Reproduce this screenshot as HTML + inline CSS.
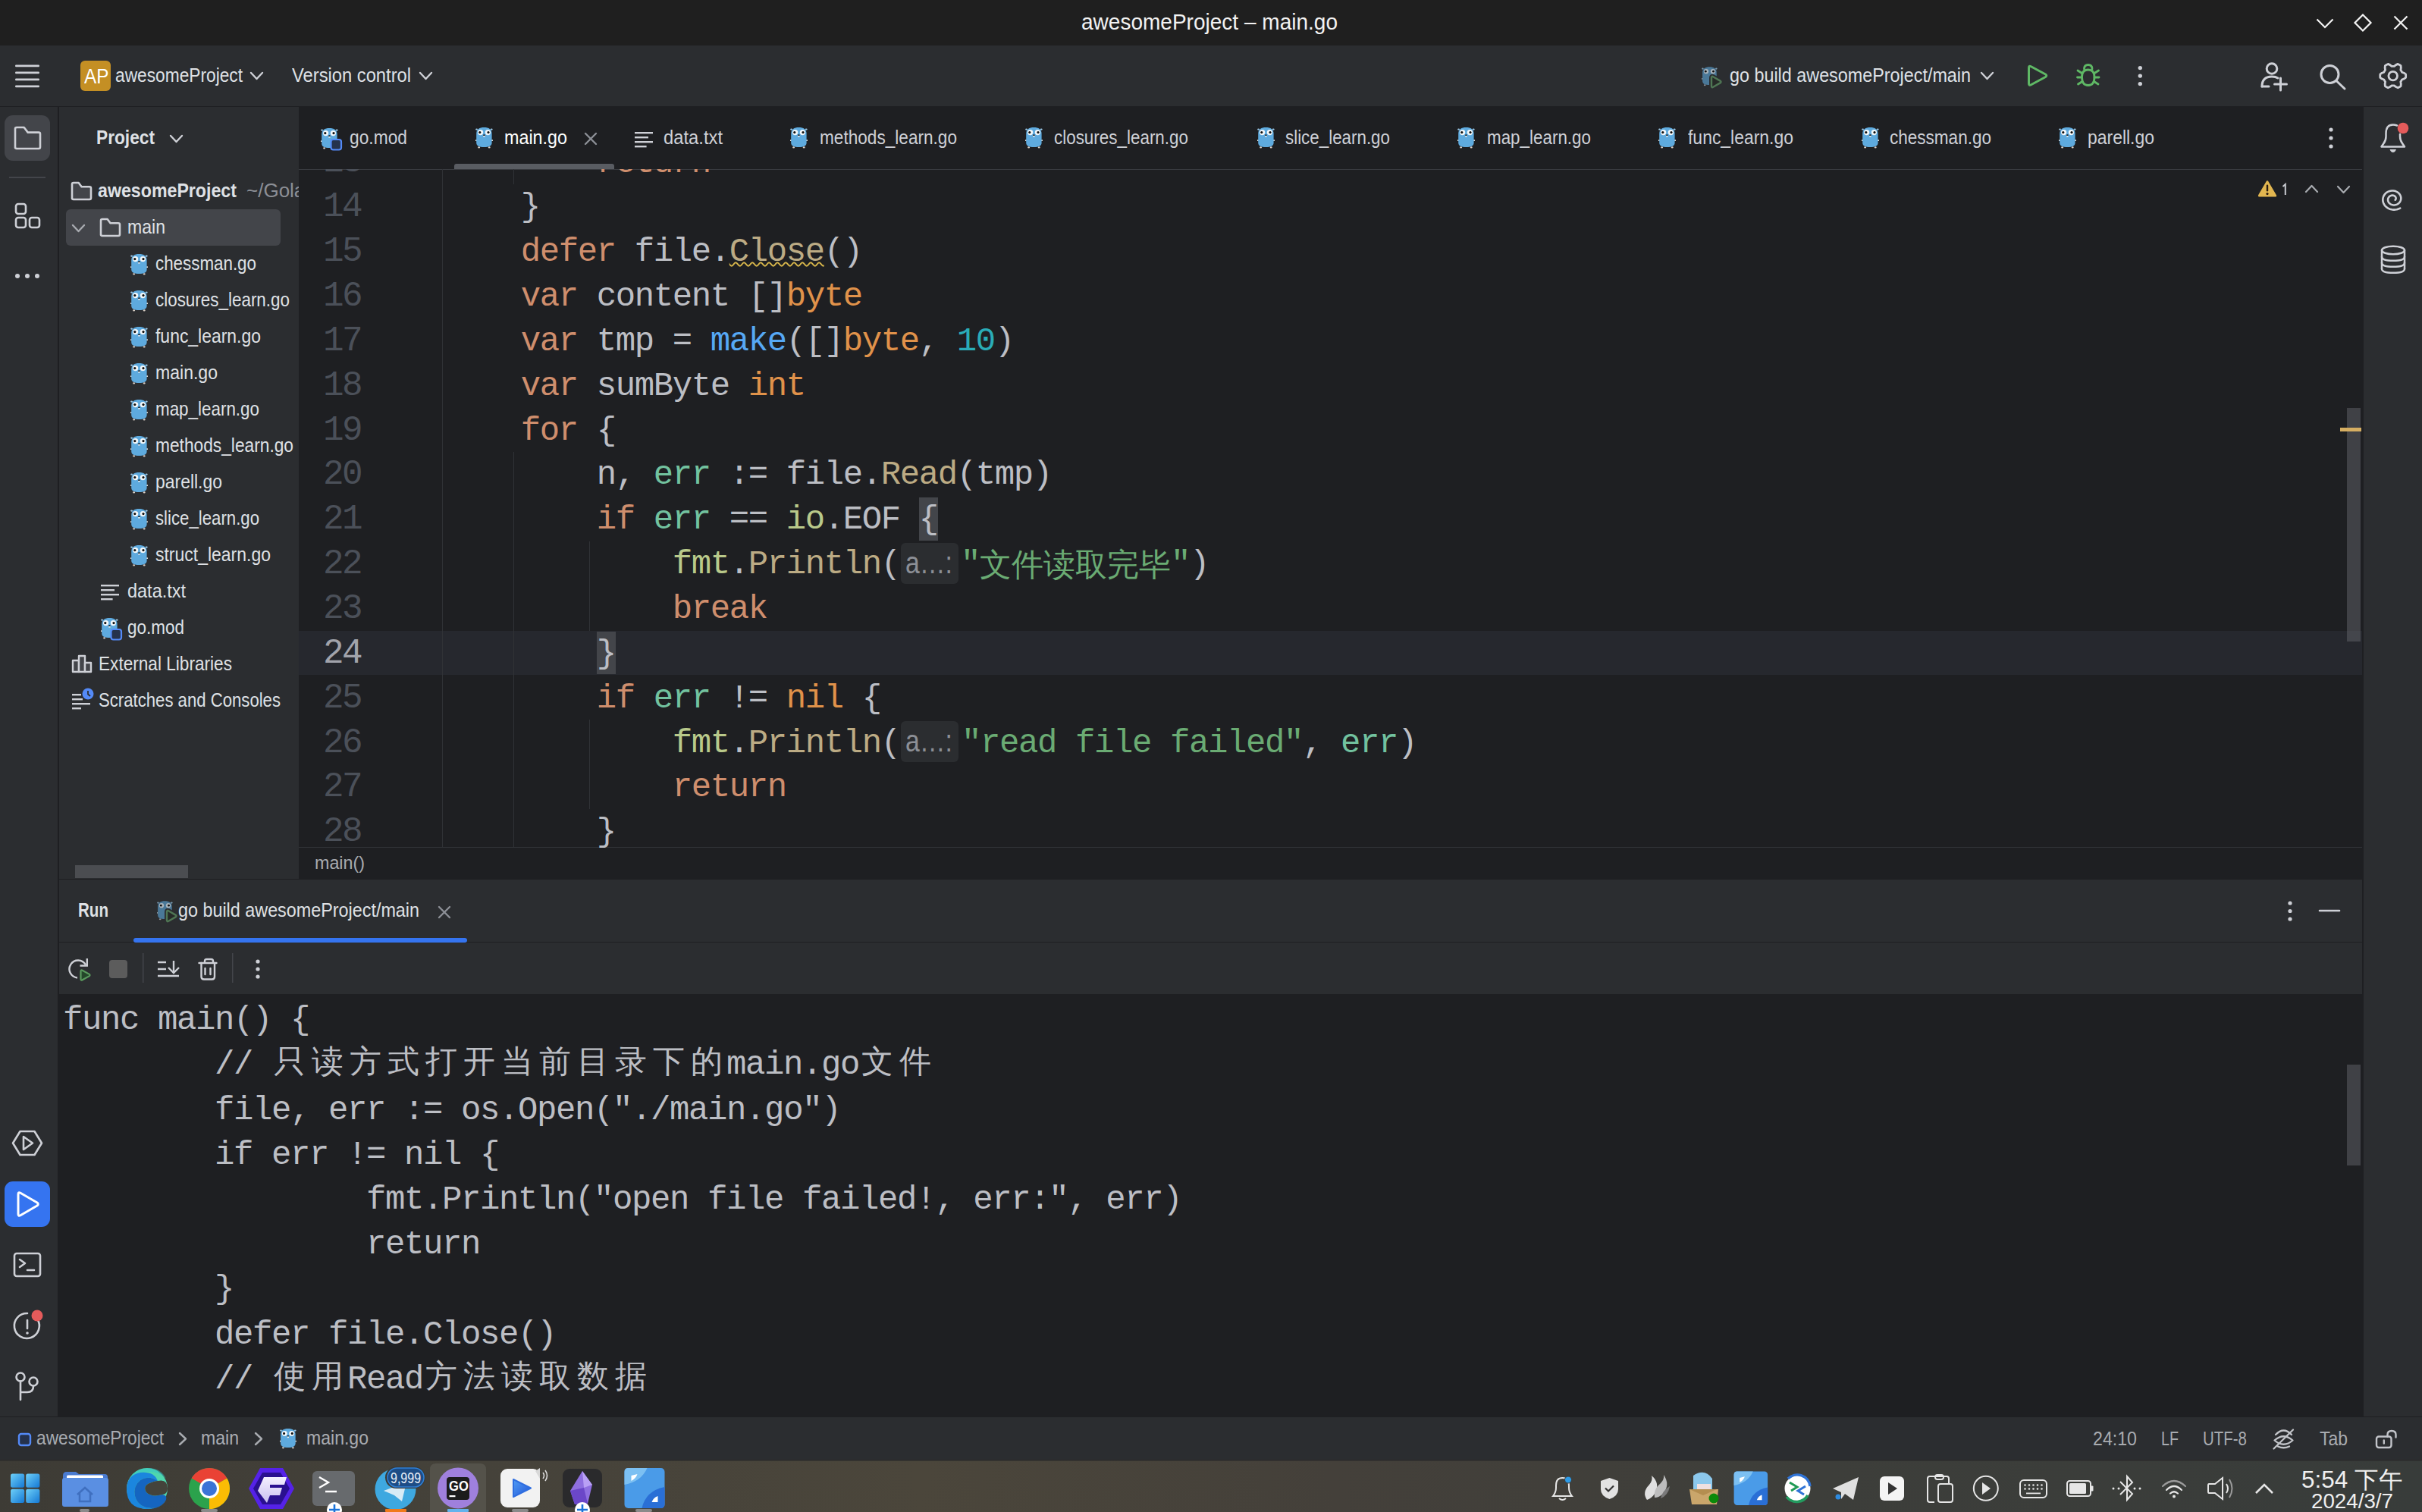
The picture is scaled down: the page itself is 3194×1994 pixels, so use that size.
<!DOCTYPE html>
<html><head><meta charset="utf-8"><title>awesomeProject – main.go</title>
<style>
html,body{margin:0;padding:0;background:#1e1f22;}
body{width:3194px;height:1994px;position:relative;overflow:hidden;font-family:'Liberation Sans', sans-serif;}
svg{overflow:visible}
</style></head><body>
<svg width="0" height="0" style="position:absolute">
<defs>
<symbol id="gopher" viewBox="0 0 23 29">
  <ellipse cx="1.6" cy="3.6" rx="1.4" ry="1.2" fill="#9cc8e6"/>
  <ellipse cx="21.2" cy="3.6" rx="1.4" ry="1.2" fill="#9cc8e6"/>
  <ellipse cx="0.9" cy="18.2" rx="1.3" ry="0.9" fill="#e9e3dd"/>
  <ellipse cx="22" cy="18.2" rx="1.3" ry="0.9" fill="#e9e3dd"/>
  <ellipse cx="4.6" cy="27.4" rx="1.5" ry="1.1" fill="#d9cfc6"/>
  <ellipse cx="18.2" cy="27.4" rx="1.5" ry="1.1" fill="#d9cfc6"/>
  <path d="M1.2 9.5 C1.2 3.2 5.2 1 11.4 1 C17.6 1 21.6 3.2 21.6 9.5 L21.6 21 C21.6 25.8 17.6 27 11.4 27 C5.2 27 1.2 25.8 1.2 21 Z" fill="#5eaade"/>
  <circle cx="6.6" cy="7.6" r="3.6" fill="#f4f8fa"/>
  <circle cx="16.4" cy="7.6" r="3.6" fill="#f4f8fa"/>
  <circle cx="5.8" cy="7.6" r="1.6" fill="#111"/>
  <circle cx="17" cy="7.6" r="1.6" fill="#111"/>
  <ellipse cx="11.4" cy="11.2" rx="1.3" ry="0.9" fill="#1a1a1a"/>
  <rect x="10.3" y="12" width="2.2" height="1.6" fill="#f4f4f4"/>
</symbol>
<symbol id="gopherdim" viewBox="0 0 23 29">
  <ellipse cx="1.6" cy="3.6" rx="1.4" ry="1.2" fill="#7d9db3"/>
  <ellipse cx="21.2" cy="3.6" rx="1.4" ry="1.2" fill="#7d9db3"/>
  <ellipse cx="0.9" cy="18.2" rx="1.3" ry="0.9" fill="#9aa0a6"/>
  <ellipse cx="4.6" cy="27.4" rx="1.5" ry="1.1" fill="#8a9096"/>
  <path d="M1.2 9.5 C1.2 3.2 5.2 1 11.4 1 C17.6 1 21.6 3.2 21.6 9.5 L21.6 21 C21.6 25.8 17.6 27 11.4 27 C5.2 27 1.2 25.8 1.2 21 Z" fill="#4a7898"/>
  <circle cx="6.6" cy="7.6" r="3.4" fill="#aab4bb"/>
  <circle cx="16.4" cy="7.6" r="3.4" fill="#aab4bb"/>
  <circle cx="5.8" cy="7.6" r="1.5" fill="#111"/>
  <circle cx="17" cy="7.6" r="1.5" fill="#111"/>
</symbol>
</defs></svg>
<div style="position:absolute;left:0px;top:0px;width:3194px;height:60px;background:#1f1f1f;"></div><div style="position:absolute;left:0px;top:60px;width:3194px;height:80px;background:#2b2d30;"></div><div style="position:absolute;left:0px;top:140px;width:3194px;height:1729px;background:#1e1f22;"></div><div style="position:absolute;left:0px;top:141px;width:76px;height:1727px;background:#2b2d30;"></div><div style="position:absolute;left:78px;top:141px;width:316px;height:1018px;background:#2b2d30;"></div><div style="position:absolute;left:394px;top:141px;width:2721px;height:976px;background:#1e1f22;"></div><div style="position:absolute;left:394px;top:1117px;width:2721px;height:42px;background:#1e1f22;"></div><div style="position:absolute;left:78px;top:1160px;width:3037px;height:82px;background:#2b2d30;"></div><div style="position:absolute;left:78px;top:1243px;width:3037px;height:68px;background:#2b2d30;"></div><div style="position:absolute;left:78px;top:1311px;width:3037px;height:557px;background:#1e1f22;"></div><div style="position:absolute;left:3117px;top:141px;width:77px;height:1727px;background:#2b2d30;"></div><div style="position:absolute;left:0px;top:1869px;width:3194px;height:56px;background:#2b2d30;"></div><div style="position:absolute;left:0;top:1925px;width:3194px;height:69px;background:linear-gradient(90deg,#3d3b35 0%,#45423a 20%,#4b463b 38%,#44403a 55%,#3d3e3a 75%,#383c3a 100%)"></div><div style="position:absolute;left:394px;top:223px;width:2721px;height:1.2px;background:#393b40;"></div><div style="position:absolute;left:599px;top:216px;width:211px;height:7px;background:#595c62;border-radius:3px 3px 0 0"></div><div style="position:absolute;left:394px;top:831.6px;width:2721px;height:58.86px;background:#26282e;"></div><div style="position:absolute;left:583px;top:223px;width:1.3px;height:894px;background:#303236;"></div><div style="position:absolute;left:677px;top:223px;width:1.3px;height:20.0px;background:#303236;"></div><div style="position:absolute;left:677px;top:596.16px;width:1.3px;height:520.84px;background:#303236;"></div><div style="position:absolute;left:777px;top:713.88px;width:1.3px;height:117.72px;background:#303236;"></div><div style="position:absolute;left:777px;top:949.3199999999999px;width:1.3px;height:117.72px;background:#303236;"></div><div style="position:absolute;left:394px;top:1116.5px;width:2721px;height:1.2px;background:#303236;"></div><div style="position:absolute;left:3095px;top:538px;width:18px;height:308px;background:rgba(98,100,106,0.5);"></div><div style="position:absolute;left:3086px;top:564px;width:28px;height:5px;background:#d6ae62;"></div><div style="position:absolute;left:99px;top:1141px;width:149px;height:17px;background:#4b4d51;"></div><div style="position:absolute;left:3095px;top:1404px;width:18px;height:133px;background:rgba(98,100,106,0.5);"></div><div style="position:absolute;left:1426px;top:15.45px;font-family:'Liberation Sans', sans-serif;font-size:29px;line-height:29px;font-weight:400;color:#f2f2f2;white-space:pre;transform:scaleX(0.9663);transform-origin:0 0;">awesomeProject – main.go</div><div style="position:absolute;left:152px;top:85.99px;font-family:'Liberation Sans', sans-serif;font-size:26px;line-height:26px;font-weight:400;color:#dfe1e5;white-space:pre;transform:scaleX(0.8741);transform-origin:0 0;">awesomeProject</div><div style="position:absolute;left:385px;top:85.99px;font-family:'Liberation Sans', sans-serif;font-size:26px;line-height:26px;font-weight:400;color:#dfe1e5;white-space:pre;transform:scaleX(0.9129);transform-origin:0 0;">Version control</div><div style="position:absolute;left:2281px;top:85.99px;font-family:'Liberation Sans', sans-serif;font-size:26px;line-height:26px;font-weight:400;color:#dfe1e5;white-space:pre;transform:scaleX(0.8981);transform-origin:0 0;">go build awesomeProject/main</div><div style="position:absolute;left:461px;top:167.99px;font-family:'Liberation Sans', sans-serif;font-size:26px;line-height:26px;font-weight:400;color:#ced0d6;white-space:pre;transform:scaleX(0.8762);transform-origin:0 0;">go.mod</div><div style="position:absolute;left:665px;top:167.99px;font-family:'Liberation Sans', sans-serif;font-size:26px;line-height:26px;font-weight:400;color:#ffffff;white-space:pre;transform:scaleX(0.8973);transform-origin:0 0;">main.go</div><div style="position:absolute;left:875px;top:167.99px;font-family:'Liberation Sans', sans-serif;font-size:26px;line-height:26px;font-weight:400;color:#ced0d6;white-space:pre;transform:scaleX(0.9146);transform-origin:0 0;">data.txt</div><div style="position:absolute;left:1081px;top:167.99px;font-family:'Liberation Sans', sans-serif;font-size:26px;line-height:26px;font-weight:400;color:#ced0d6;white-space:pre;transform:scaleX(0.8696);transform-origin:0 0;">methods_learn.go</div><div style="position:absolute;left:1390px;top:167.99px;font-family:'Liberation Sans', sans-serif;font-size:26px;line-height:26px;font-weight:400;color:#ced0d6;white-space:pre;transform:scaleX(0.8624);transform-origin:0 0;">closures_learn.go</div><div style="position:absolute;left:1695px;top:167.99px;font-family:'Liberation Sans', sans-serif;font-size:26px;line-height:26px;font-weight:400;color:#ced0d6;white-space:pre;transform:scaleX(0.8601);transform-origin:0 0;">slice_learn.go</div><div style="position:absolute;left:1961px;top:167.99px;font-family:'Liberation Sans', sans-serif;font-size:26px;line-height:26px;font-weight:400;color:#ced0d6;white-space:pre;transform:scaleX(0.8616);transform-origin:0 0;">map_learn.go</div><div style="position:absolute;left:2226px;top:167.99px;font-family:'Liberation Sans', sans-serif;font-size:26px;line-height:26px;font-weight:400;color:#ced0d6;white-space:pre;transform:scaleX(0.8822);transform-origin:0 0;">func_learn.go</div><div style="position:absolute;left:2492px;top:167.99px;font-family:'Liberation Sans', sans-serif;font-size:26px;line-height:26px;font-weight:400;color:#ced0d6;white-space:pre;transform:scaleX(0.8664);transform-origin:0 0;">chessman.go</div><div style="position:absolute;left:2753px;top:167.99px;font-family:'Liberation Sans', sans-serif;font-size:26px;line-height:26px;font-weight:400;color:#ced0d6;white-space:pre;transform:scaleX(0.8823);transform-origin:0 0;">parell.go</div><div style="position:absolute;left:127px;top:167.99px;font-family:'Liberation Sans', sans-serif;font-size:26px;line-height:26px;font-weight:700;color:#dfe1e5;white-space:pre;transform:scaleX(0.8734);transform-origin:0 0;">Project</div><div style="position:absolute;left:129px;top:237.99px;font-family:'Liberation Sans', sans-serif;font-size:26px;line-height:26px;font-weight:700;color:#dfe1e5;white-space:pre;transform:scaleX(0.8917);transform-origin:0 0;">awesomeProject</div><div style="position:absolute;left:325px;top:230px;width:69px;height:45px;overflow:hidden"><div style="position:absolute;left:0px;top:7.99px;font-family:'Liberation Sans', sans-serif;font-size:26px;line-height:26px;font-weight:400;color:#8c8f96;white-space:pre;">~/GolandProjects/awesomeProject</div></div><div style="position:absolute;left:87px;top:276px;width:283px;height:48px;background:#43454a;border-radius:6px"></div><div style="position:absolute;left:168px;top:285.99px;font-family:'Liberation Sans', sans-serif;font-size:26px;line-height:26px;font-weight:400;color:#dfe1e5;white-space:pre;transform:scaleX(0.8872);transform-origin:0 0;">main</div><div style="position:absolute;left:205px;top:333.99px;font-family:'Liberation Sans', sans-serif;font-size:26px;line-height:26px;font-weight:400;color:#dfe1e5;white-space:pre;transform:scaleX(0.8600);transform-origin:0 0;">chessman.go</div><div style="position:absolute;left:205px;top:381.99px;font-family:'Liberation Sans', sans-serif;font-size:26px;line-height:26px;font-weight:400;color:#dfe1e5;white-space:pre;transform:scaleX(0.8624);transform-origin:0 0;">closures_learn.go</div><div style="position:absolute;left:205px;top:429.99px;font-family:'Liberation Sans', sans-serif;font-size:26px;line-height:26px;font-weight:400;color:#dfe1e5;white-space:pre;transform:scaleX(0.8822);transform-origin:0 0;">func_learn.go</div><div style="position:absolute;left:205px;top:477.99px;font-family:'Liberation Sans', sans-serif;font-size:26px;line-height:26px;font-weight:400;color:#dfe1e5;white-space:pre;transform:scaleX(0.8865);transform-origin:0 0;">main.go</div><div style="position:absolute;left:205px;top:525.99px;font-family:'Liberation Sans', sans-serif;font-size:26px;line-height:26px;font-weight:400;color:#dfe1e5;white-space:pre;transform:scaleX(0.8616);transform-origin:0 0;">map_learn.go</div><div style="position:absolute;left:205px;top:573.99px;font-family:'Liberation Sans', sans-serif;font-size:26px;line-height:26px;font-weight:400;color:#dfe1e5;white-space:pre;transform:scaleX(0.8744);transform-origin:0 0;">methods_learn.go</div><div style="position:absolute;left:205px;top:621.99px;font-family:'Liberation Sans', sans-serif;font-size:26px;line-height:26px;font-weight:400;color:#dfe1e5;white-space:pre;transform:scaleX(0.8823);transform-origin:0 0;">parell.go</div><div style="position:absolute;left:205px;top:669.99px;font-family:'Liberation Sans', sans-serif;font-size:26px;line-height:26px;font-weight:400;color:#dfe1e5;white-space:pre;transform:scaleX(0.8539);transform-origin:0 0;">slice_learn.go</div><div style="position:absolute;left:205px;top:717.99px;font-family:'Liberation Sans', sans-serif;font-size:26px;line-height:26px;font-weight:400;color:#dfe1e5;white-space:pre;transform:scaleX(0.8838);transform-origin:0 0;">struct_learn.go</div><div style="position:absolute;left:168px;top:765.99px;font-family:'Liberation Sans', sans-serif;font-size:26px;line-height:26px;font-weight:400;color:#dfe1e5;white-space:pre;transform:scaleX(0.9029);transform-origin:0 0;">data.txt</div><div style="position:absolute;left:168px;top:813.99px;font-family:'Liberation Sans', sans-serif;font-size:26px;line-height:26px;font-weight:400;color:#dfe1e5;white-space:pre;transform:scaleX(0.8647);transform-origin:0 0;">go.mod</div><div style="position:absolute;left:130px;top:861.99px;font-family:'Liberation Sans', sans-serif;font-size:26px;line-height:26px;font-weight:400;color:#dfe1e5;white-space:pre;transform:scaleX(0.8699);transform-origin:0 0;">External Libraries</div><div style="position:absolute;left:130px;top:909.99px;font-family:'Liberation Sans', sans-serif;font-size:26px;line-height:26px;font-weight:400;color:#dfe1e5;white-space:pre;transform:scaleX(0.8516);transform-origin:0 0;">Scratches and Consoles</div><div style="position:absolute;left:394px;top:223px;width:200px;height:894px;overflow:hidden;pointer-events:none"><div style="position:absolute;left:32px;top:-31.60px;font-family:'Liberation Mono', monospace;font-size:46px;line-height:46px;font-weight:400;color:#4b5059;white-space:pre;letter-spacing:-2.600px;">13</div></div><div style="position:absolute;left:426px;top:250.26px;font-family:'Liberation Mono', monospace;font-size:46px;line-height:46px;font-weight:400;color:#4b5059;white-space:pre;letter-spacing:-2.600px;">14</div><div style="position:absolute;left:426px;top:309.12px;font-family:'Liberation Mono', monospace;font-size:46px;line-height:46px;font-weight:400;color:#4b5059;white-space:pre;letter-spacing:-2.600px;">15</div><div style="position:absolute;left:426px;top:367.98px;font-family:'Liberation Mono', monospace;font-size:46px;line-height:46px;font-weight:400;color:#4b5059;white-space:pre;letter-spacing:-2.600px;">16</div><div style="position:absolute;left:426px;top:426.84px;font-family:'Liberation Mono', monospace;font-size:46px;line-height:46px;font-weight:400;color:#4b5059;white-space:pre;letter-spacing:-2.600px;">17</div><div style="position:absolute;left:426px;top:485.70px;font-family:'Liberation Mono', monospace;font-size:46px;line-height:46px;font-weight:400;color:#4b5059;white-space:pre;letter-spacing:-2.600px;">18</div><div style="position:absolute;left:426px;top:544.56px;font-family:'Liberation Mono', monospace;font-size:46px;line-height:46px;font-weight:400;color:#4b5059;white-space:pre;letter-spacing:-2.600px;">19</div><div style="position:absolute;left:426px;top:603.42px;font-family:'Liberation Mono', monospace;font-size:46px;line-height:46px;font-weight:400;color:#4b5059;white-space:pre;letter-spacing:-2.600px;">20</div><div style="position:absolute;left:426px;top:662.28px;font-family:'Liberation Mono', monospace;font-size:46px;line-height:46px;font-weight:400;color:#4b5059;white-space:pre;letter-spacing:-2.600px;">21</div><div style="position:absolute;left:426px;top:721.14px;font-family:'Liberation Mono', monospace;font-size:46px;line-height:46px;font-weight:400;color:#4b5059;white-space:pre;letter-spacing:-2.600px;">22</div><div style="position:absolute;left:426px;top:780.00px;font-family:'Liberation Mono', monospace;font-size:46px;line-height:46px;font-weight:400;color:#4b5059;white-space:pre;letter-spacing:-2.600px;">23</div><div style="position:absolute;left:426px;top:838.86px;font-family:'Liberation Mono', monospace;font-size:46px;line-height:46px;font-weight:400;color:#a1a3ab;white-space:pre;letter-spacing:-2.600px;">24</div><div style="position:absolute;left:426px;top:897.72px;font-family:'Liberation Mono', monospace;font-size:46px;line-height:46px;font-weight:400;color:#4b5059;white-space:pre;letter-spacing:-2.600px;">25</div><div style="position:absolute;left:426px;top:956.58px;font-family:'Liberation Mono', monospace;font-size:46px;line-height:46px;font-weight:400;color:#4b5059;white-space:pre;letter-spacing:-2.600px;">26</div><div style="position:absolute;left:426px;top:1015.44px;font-family:'Liberation Mono', monospace;font-size:46px;line-height:46px;font-weight:400;color:#4b5059;white-space:pre;letter-spacing:-2.600px;">27</div><div style="position:absolute;left:426px;top:1074.30px;font-family:'Liberation Mono', monospace;font-size:46px;line-height:46px;font-weight:400;color:#4b5059;white-space:pre;letter-spacing:-2.600px;">28</div><div style="position:absolute;left:394px;top:223px;width:2721px;height:100px;overflow:hidden"><div style="position:absolute;left:392.70000000000005px;top:-30.07px;font-family:'Liberation Mono', monospace;font-size:44px;line-height:44px;font-weight:400;color:#cf8e6d;white-space:pre;letter-spacing:-1.400px;">return</div></div><div style="position:absolute;left:686.7px;top:251.29px;font-family:'Liberation Mono', monospace;font-size:44px;line-height:44px;font-weight:400;color:#bcbec4;white-space:pre;letter-spacing:-1.400px;"><span style="color:#bcbec4">}</span></div><div style="position:absolute;left:686.7px;top:310.15px;font-family:'Liberation Mono', monospace;font-size:44px;line-height:44px;font-weight:400;color:#bcbec4;white-space:pre;letter-spacing:-1.400px;"><span style="color:#cf8e6d">defer</span><span style="color:#bcbec4"> file.</span><span style="color:#bcab84;text-decoration:underline wavy #d8b64a;text-underline-offset:1px;text-decoration-thickness:2px">Close</span><span style="color:#bcbec4">()</span></div><div style="position:absolute;left:686.7px;top:369.01px;font-family:'Liberation Mono', monospace;font-size:44px;line-height:44px;font-weight:400;color:#bcbec4;white-space:pre;letter-spacing:-1.400px;"><span style="color:#cf8e6d">var</span><span style="color:#bcbec4"> content []</span><span style="color:#e0924a">byte</span></div><div style="position:absolute;left:686.7px;top:427.87px;font-family:'Liberation Mono', monospace;font-size:44px;line-height:44px;font-weight:400;color:#bcbec4;white-space:pre;letter-spacing:-1.400px;"><span style="color:#cf8e6d">var</span><span style="color:#bcbec4"> tmp = </span><span style="color:#56a8f5">make</span><span style="color:#bcbec4">([]</span><span style="color:#e0924a">byte</span><span style="color:#bcbec4">, </span><span style="color:#2aacb8">10</span><span style="color:#bcbec4">)</span></div><div style="position:absolute;left:686.7px;top:486.73px;font-family:'Liberation Mono', monospace;font-size:44px;line-height:44px;font-weight:400;color:#bcbec4;white-space:pre;letter-spacing:-1.400px;"><span style="color:#cf8e6d">var</span><span style="color:#bcbec4"> sumByte </span><span style="color:#e0924a">int</span></div><div style="position:absolute;left:686.7px;top:545.59px;font-family:'Liberation Mono', monospace;font-size:44px;line-height:44px;font-weight:400;color:#bcbec4;white-space:pre;letter-spacing:-1.400px;"><span style="color:#cf8e6d">for</span><span style="color:#bcbec4"> {</span></div><div style="position:absolute;left:786.7px;top:604.45px;font-family:'Liberation Mono', monospace;font-size:44px;line-height:44px;font-weight:400;color:#bcbec4;white-space:pre;letter-spacing:-1.400px;"><span style="color:#bcbec4">n, </span><span style="color:#72c29f">err</span><span style="color:#bcbec4"> := file.</span><span style="color:#bcab84">Read</span><span style="color:#bcbec4">(tmp)</span></div><div style="position:absolute;left:1211.7px;top:656.02px;width:25px;height:56.86px;background:#43454a;"></div><div style="position:absolute;left:786.7px;top:832.6px;width:25px;height:56.86px;background:#43454a;"></div><div style="position:absolute;left:786.7px;top:663.31px;font-family:'Liberation Mono', monospace;font-size:44px;line-height:44px;font-weight:400;color:#bcbec4;white-space:pre;letter-spacing:-1.400px;"><span style="color:#cf8e6d">if</span><span style="color:#bcbec4"> </span><span style="color:#72c29f">err</span><span style="color:#bcbec4"> == </span><span style="color:#b9c98a">io</span><span style="color:#bcbec4">.EOF {</span></div><div style="position:absolute;left:1188px;top:715.9px;width:76px;height:54px;background:#2b2d30;border-radius:6px"></div><div style="position:absolute;left:1194px;top:722.02px;font-family:'Liberation Sans', sans-serif;font-size:40px;line-height:40px;font-weight:400;color:#8c8f96;white-space:pre;transform:scaleX(0.8452);transform-origin:0 0;">a…:</div><div style="position:absolute;left:1188px;top:951.3px;width:76px;height:54px;background:#2b2d30;border-radius:6px"></div><div style="position:absolute;left:1194px;top:957.46px;font-family:'Liberation Sans', sans-serif;font-size:40px;line-height:40px;font-weight:400;color:#8c8f96;white-space:pre;transform:scaleX(0.8452);transform-origin:0 0;">a…:</div><div style="position:absolute;left:886.7px;top:722.17px;font-family:'Liberation Mono', monospace;font-size:44px;line-height:44px;font-weight:400;color:#bcbec4;white-space:pre;letter-spacing:-1.400px;"><span style="color:#b9c98a">fmt</span><span style="color:#bcbec4">.</span><span style="color:#bcab84">Println</span><span style="color:#bcbec4">(</span></div><div style="position:absolute;left:1267px;top:722.17px;font-family:'Liberation Mono', monospace;font-size:44px;line-height:44px;font-weight:400;color:#6aab73;white-space:pre;letter-spacing:-1.400px;">"<span style="letter-spacing:0;font-size:41.5px;position:relative;top:2.5px">文件读取完毕</span>"<span style="color:#bcbec4">)</span></div><div style="position:absolute;left:886.7px;top:781.03px;font-family:'Liberation Mono', monospace;font-size:44px;line-height:44px;font-weight:400;color:#bcbec4;white-space:pre;letter-spacing:-1.400px;"><span style="color:#cf8e6d">break</span></div><div style="position:absolute;left:786.7px;top:839.89px;font-family:'Liberation Mono', monospace;font-size:44px;line-height:44px;font-weight:400;color:#bcbec4;white-space:pre;letter-spacing:-1.400px;"><span style="color:#bcbec4">}</span></div><div style="position:absolute;left:786.7px;top:898.75px;font-family:'Liberation Mono', monospace;font-size:44px;line-height:44px;font-weight:400;color:#bcbec4;white-space:pre;letter-spacing:-1.400px;"><span style="color:#cf8e6d">if</span><span style="color:#bcbec4"> </span><span style="color:#72c29f">err</span><span style="color:#bcbec4"> != </span><span style="color:#e0924a">nil</span><span style="color:#bcbec4"> {</span></div><div style="position:absolute;left:886.7px;top:957.61px;font-family:'Liberation Mono', monospace;font-size:44px;line-height:44px;font-weight:400;color:#bcbec4;white-space:pre;letter-spacing:-1.400px;"><span style="color:#b9c98a">fmt</span><span style="color:#bcbec4">.</span><span style="color:#bcab84">Println</span><span style="color:#bcbec4">(</span></div><div style="position:absolute;left:1268px;top:957.61px;font-family:'Liberation Mono', monospace;font-size:44px;line-height:44px;font-weight:400;color:#6aab73;white-space:pre;letter-spacing:-1.400px;">"read file failed"<span style="color:#bcbec4">, </span><span style="color:#72c29f">err</span><span style="color:#bcbec4">)</span></div><div style="position:absolute;left:886.7px;top:1016.47px;font-family:'Liberation Mono', monospace;font-size:44px;line-height:44px;font-weight:400;color:#bcbec4;white-space:pre;letter-spacing:-1.400px;"><span style="color:#cf8e6d">return</span></div><div style="position:absolute;left:786.7px;top:1075.33px;font-family:'Liberation Mono', monospace;font-size:44px;line-height:44px;font-weight:400;color:#bcbec4;white-space:pre;letter-spacing:-1.400px;"><span style="color:#bcbec4">}</span></div><div style="position:absolute;left:415px;top:1125.68px;font-family:'Liberation Sans', sans-serif;font-size:24px;line-height:24px;font-weight:400;color:#a8abb0;white-space:pre;transform:scaleX(0.9704);transform-origin:0 0;">main()</div><div style="position:absolute;left:103px;top:1186.99px;font-family:'Liberation Sans', sans-serif;font-size:26px;line-height:26px;font-weight:700;color:#dfe1e5;white-space:pre;transform:scaleX(0.7913);transform-origin:0 0;">Run</div><div style="position:absolute;left:235px;top:1186.99px;font-family:'Liberation Sans', sans-serif;font-size:26px;line-height:26px;font-weight:400;color:#dfe1e5;white-space:pre;transform:scaleX(0.8981);transform-origin:0 0;">go build awesomeProject/main</div><div style="position:absolute;left:176px;top:1237px;width:440px;height:6px;background:#3574f0;border-radius:3px"></div><div style="position:absolute;left:83.0px;top:1323.29px;font-family:'Liberation Mono', monospace;font-size:44px;line-height:44px;font-weight:400;color:#bcbec4;white-space:pre;letter-spacing:-1.400px;">func main() {</div><div style="position:absolute;left:283.0px;top:1382.49px;font-family:'Liberation Mono', monospace;font-size:44px;line-height:44px;font-weight:400;color:#bcbec4;white-space:pre;letter-spacing:-1.400px;">// <span style="letter-spacing:8.00px;font-size:42px;position:relative;top:-2px;left:2.5px">只</span><span style="letter-spacing:8.00px;font-size:42px;position:relative;top:-2px;left:2.5px">读</span><span style="letter-spacing:8.00px;font-size:42px;position:relative;top:-2px;left:2.5px">方</span><span style="letter-spacing:8.00px;font-size:42px;position:relative;top:-2px;left:2.5px">式</span><span style="letter-spacing:8.00px;font-size:42px;position:relative;top:-2px;left:2.5px">打</span><span style="letter-spacing:8.00px;font-size:42px;position:relative;top:-2px;left:2.5px">开</span><span style="letter-spacing:8.00px;font-size:42px;position:relative;top:-2px;left:2.5px">当</span><span style="letter-spacing:8.00px;font-size:42px;position:relative;top:-2px;left:2.5px">前</span><span style="letter-spacing:8.00px;font-size:42px;position:relative;top:-2px;left:2.5px">目</span><span style="letter-spacing:8.00px;font-size:42px;position:relative;top:-2px;left:2.5px">录</span><span style="letter-spacing:8.00px;font-size:42px;position:relative;top:-2px;left:2.5px">下</span><span style="letter-spacing:8.00px;font-size:42px;position:relative;top:-2px;left:2.5px">的</span>main.go<span style="letter-spacing:8.00px;font-size:42px;position:relative;top:-2px;left:2.5px">文</span><span style="letter-spacing:8.00px;font-size:42px;position:relative;top:-2px;left:2.5px">件</span></div><div style="position:absolute;left:283.0px;top:1441.69px;font-family:'Liberation Mono', monospace;font-size:44px;line-height:44px;font-weight:400;color:#bcbec4;white-space:pre;letter-spacing:-1.400px;">file, err := os.Open(&quot;./main.go&quot;)</div><div style="position:absolute;left:283.0px;top:1500.89px;font-family:'Liberation Mono', monospace;font-size:44px;line-height:44px;font-weight:400;color:#bcbec4;white-space:pre;letter-spacing:-1.400px;">if err != nil {</div><div style="position:absolute;left:483.0px;top:1560.09px;font-family:'Liberation Mono', monospace;font-size:44px;line-height:44px;font-weight:400;color:#bcbec4;white-space:pre;letter-spacing:-1.400px;">fmt.Println(&quot;open file failed!, err:&quot;, err)</div><div style="position:absolute;left:483.0px;top:1619.29px;font-family:'Liberation Mono', monospace;font-size:44px;line-height:44px;font-weight:400;color:#bcbec4;white-space:pre;letter-spacing:-1.400px;">return</div><div style="position:absolute;left:283.0px;top:1678.49px;font-family:'Liberation Mono', monospace;font-size:44px;line-height:44px;font-weight:400;color:#bcbec4;white-space:pre;letter-spacing:-1.400px;">}</div><div style="position:absolute;left:283.0px;top:1737.69px;font-family:'Liberation Mono', monospace;font-size:44px;line-height:44px;font-weight:400;color:#bcbec4;white-space:pre;letter-spacing:-1.400px;">defer file.Close()</div><div style="position:absolute;left:283.0px;top:1796.89px;font-family:'Liberation Mono', monospace;font-size:44px;line-height:44px;font-weight:400;color:#bcbec4;white-space:pre;letter-spacing:-1.400px;">// <span style="letter-spacing:8.00px;font-size:42px;position:relative;top:-2px;left:2.5px">使</span><span style="letter-spacing:8.00px;font-size:42px;position:relative;top:-2px;left:2.5px">用</span>Read<span style="letter-spacing:8.00px;font-size:42px;position:relative;top:-2px;left:2.5px">方</span><span style="letter-spacing:8.00px;font-size:42px;position:relative;top:-2px;left:2.5px">法</span><span style="letter-spacing:8.00px;font-size:42px;position:relative;top:-2px;left:2.5px">读</span><span style="letter-spacing:8.00px;font-size:42px;position:relative;top:-2px;left:2.5px">取</span><span style="letter-spacing:8.00px;font-size:42px;position:relative;top:-2px;left:2.5px">数</span><span style="letter-spacing:8.00px;font-size:42px;position:relative;top:-2px;left:2.5px">据</span></div><div style="position:absolute;left:48px;top:1882.99px;font-family:'Liberation Sans', sans-serif;font-size:26px;line-height:26px;font-weight:400;color:#a8abb0;white-space:pre;transform:scaleX(0.8741);transform-origin:0 0;">awesomeProject</div><div style="position:absolute;left:265px;top:1882.99px;font-family:'Liberation Sans', sans-serif;font-size:26px;line-height:26px;font-weight:400;color:#a8abb0;white-space:pre;transform:scaleX(0.8872);transform-origin:0 0;">main</div><div style="position:absolute;left:404px;top:1882.99px;font-family:'Liberation Sans', sans-serif;font-size:26px;line-height:26px;font-weight:400;color:#a8abb0;white-space:pre;transform:scaleX(0.8865);transform-origin:0 0;">main.go</div><div style="position:absolute;left:2760px;top:1883.99px;font-family:'Liberation Sans', sans-serif;font-size:26px;line-height:26px;font-weight:400;color:#a8abb0;white-space:pre;transform:scaleX(0.8912);transform-origin:0 0;">24:10</div><div style="position:absolute;left:2850px;top:1883.99px;font-family:'Liberation Sans', sans-serif;font-size:26px;line-height:26px;font-weight:400;color:#a8abb0;white-space:pre;transform:scaleX(0.7580);transform-origin:0 0;">LF</div><div style="position:absolute;left:2905px;top:1883.99px;font-family:'Liberation Sans', sans-serif;font-size:26px;line-height:26px;font-weight:400;color:#a8abb0;white-space:pre;transform:scaleX(0.7873);transform-origin:0 0;">UTF-8</div><div style="position:absolute;left:3059px;top:1883.99px;font-family:'Liberation Sans', sans-serif;font-size:26px;line-height:26px;font-weight:400;color:#a8abb0;white-space:pre;transform:scaleX(0.8826);transform-origin:0 0;">Tab</div><div style="position:absolute;left:3035px;top:1935.76px;font-family:'Liberation Sans', sans-serif;font-size:31px;line-height:31px;font-weight:400;color:#f0f0f0;white-space:pre;transform:scaleX(1.0156);transform-origin:0 0;">5:54 下午</div><div style="position:absolute;left:3048px;top:1967.14px;font-family:'Liberation Sans', sans-serif;font-size:27px;line-height:27px;font-weight:400;color:#f0f0f0;white-space:pre;transform:scaleX(1.0275);transform-origin:0 0;">2024/3/7</div>
<svg style="position:absolute;left:0;top:0" width="3194" height="1994"><polyline points="3055.5,25.5 3066,36 3076.5,25.5" fill="none" stroke="#f4f4f4" stroke-width="2.2"/><path d="M3116,19.5 L3126.5,30 L3116,40.5 L3105.5,30 Z" fill="none" stroke="#f4f4f4" stroke-width="2.2"/><path d="M3157.5,21.5 L3174.5,38.5 M3174.5,21.5 L3157.5,38.5" fill="none" stroke="#f4f4f4" stroke-width="2.2"/><rect x="20" y="85.5" width="32" height="2.8" rx="1.2" fill="#ced0d6"/><rect x="20" y="94.5" width="32" height="2.8" rx="1.2" fill="#ced0d6"/><rect x="20" y="103.5" width="32" height="2.8" rx="1.2" fill="#ced0d6"/><rect x="20" y="112.5" width="32" height="2.8" rx="1.2" fill="#ced0d6"/><rect x="106" y="80" width="40" height="40" rx="6" fill="#c48f24"/><polyline points="331,96 338.5,104 346,96" fill="none" stroke="#ced0d6" stroke-width="2.4" stroke-linecap="round" stroke-linejoin="round"/><polyline points="554,96 561.5,104 569,96" fill="none" stroke="#ced0d6" stroke-width="2.4" stroke-linecap="round" stroke-linejoin="round"/><use href="#gopherdim" x="2244" y="87" width="21" height="27"/><path d="M2257,102.5 Q2257,100 2259.2,101.2 L2268.5,106.6 Q2270.5,108 2268.5,109.4 L2259.2,114.8 Q2257,116 2257,113.5 Z" fill="#262a27" stroke="#2b2d30" stroke-width="6" stroke-linejoin="round"/><path d="M2257,102.5 Q2257,100 2259.2,101.2 L2268.5,106.6 Q2270.5,108 2268.5,109.4 L2259.2,114.8 Q2257,116 2257,113.5 Z" fill="#262a27" stroke="#4f7654" stroke-width="2.4" stroke-linejoin="round"/><polyline points="2613,96 2620.5,104 2628,96" fill="none" stroke="#ced0d6" stroke-width="2.4" stroke-linecap="round" stroke-linejoin="round"/><path d="M2675.5,89.5 Q2675.5,86 2678.5,87.8 L2697.5,98 Q2700,99.8 2697.5,101.5 L2678.5,111.8 Q2675.5,113.5 2675.5,110 Z" fill="none" stroke="#5fb865" stroke-width="3" stroke-linecap="round" stroke-linejoin="round"/><g fill="none" stroke="#5fb865" stroke-width="2.8" stroke-linecap="round" stroke-linejoin="round"><path d="M2745.5,101.5 Q2745.5,92 2753.8,92 Q2762,92 2762,101.5 Q2762,112.5 2753.8,112.5 Q2745.5,112.5 2745.5,101.5 Z"/><path d="M2748.5,91 Q2748.5,85.5 2753.8,85.5 Q2759,85.5 2759,91"/><path d="M2745.5,96.5 L2740,93 M2745.5,102 L2739.5,102 M2746,107.5 L2740.5,111 M2762,96.5 L2767.5,93 M2762,102 L2768,102 M2761.5,107.5 L2767,111"/></g><circle cx="2822.3" cy="89.6" r="2.7" fill="#ced0d6"/><circle cx="2822.3" cy="100.1" r="2.7" fill="#ced0d6"/><circle cx="2822.3" cy="110.6" r="2.7" fill="#ced0d6"/><g fill="none" stroke="#ced0d6" stroke-width="3" stroke-linecap="round" stroke-linejoin="round"><circle cx="2996" cy="90.5" r="6.8"/><path d="M2983,114 Q2983,101 2996,101 Q3001,101 3004,103"/><path d="M2983,114 L2992,114"/><path d="M3007.5,103 L3007.5,119 M2999.5,111 L3015.5,111"/></g><g fill="none" stroke="#ced0d6" stroke-width="3" stroke-linecap="round" stroke-linejoin="round"><circle cx="3072.5" cy="98" r="11.5"/><path d="M3081,106.5 L3092,117"/></g><g fill="none" stroke="#ced0d6" stroke-width="2.8" stroke-linecap="round" stroke-linejoin="round"><polygon points="3172.70,100.10 3172.55,102.32 3170.19,103.98 3167.53,105.00 3166.79,106.50 3165.85,107.89 3166.31,110.71 3166.05,113.59 3164.20,114.82 3162.21,115.81 3159.58,114.59 3157.37,112.79 3155.70,112.90 3154.03,112.79 3151.82,114.59 3149.19,115.81 3147.20,114.82 3145.35,113.59 3145.09,110.71 3145.55,107.89 3144.61,106.50 3143.87,105.00 3141.21,103.98 3138.85,102.32 3138.70,100.10 3138.85,97.88 3141.21,96.22 3143.87,95.20 3144.61,93.70 3145.55,92.31 3145.09,89.49 3145.35,86.61 3147.20,85.38 3149.19,84.39 3151.82,85.61 3154.03,87.41 3155.70,87.30 3157.37,87.41 3159.58,85.61 3162.21,84.39 3164.20,85.38 3166.05,86.61 3166.31,89.49 3165.85,92.31 3166.79,93.70 3167.53,95.20 3170.19,96.22 3172.55,97.88"/><circle cx="3155.7" cy="100.1" r="5.8"/></g><rect x="6" y="152" width="60" height="60" rx="11" fill="#43454a"/><path d="M20,195 L20,170 Q20,168 22,168 L31.68,168 L36.72,174.6 L51,174.6 Q53,174.6 53,176.6 L53,194 Q53,196 51,196 L22,196 Q20,196 20,194 Z" fill="#43454a" stroke="#ced0d6" stroke-width="2.6" stroke-linecap="round" stroke-linejoin="round"/><rect x="12" y="233" width="48" height="2" fill="#43454a"/><g fill="none" stroke="#ced0d6" stroke-width="2.6" stroke-linecap="round" stroke-linejoin="round"><rect x="21" y="269" width="13" height="13" rx="3"/><rect x="21" y="287" width="13" height="13" rx="3"/><rect x="39" y="287" width="13" height="13" rx="3"/></g><circle cx="23" cy="364" r="3" fill="#ced0d6"/><circle cx="36" cy="364" r="3" fill="#ced0d6"/><circle cx="49" cy="364" r="3" fill="#ced0d6"/><g fill="none" stroke="#ced0d6" stroke-width="2.6" stroke-linecap="round" stroke-linejoin="round"><path d="M26.5,1492 L45.5,1492 L55,1507.5 L45.5,1523 L26.5,1523 L17,1507.5 Z"/><path d="M31,1499 L43,1507.5 L31,1516 Z"/></g><rect x="6" y="1558" width="60" height="60" rx="11" fill="#3574f0"/><path d="M24,1575 Q24,1571.5 27,1573.2 L49,1586 Q51.5,1588 49,1590 L27,1602.8 Q24,1604.5 24,1601 Z" fill="none" stroke="#ffffff" stroke-width="3" stroke-linecap="round" stroke-linejoin="round"/><g fill="none" stroke="#ced0d6" stroke-width="2.6" stroke-linecap="round" stroke-linejoin="round"><rect x="19" y="1653" width="34" height="30" rx="3"/><path d="M26,1661 L33,1666 L26,1671 M36,1675 L45,1675"/></g><g fill="none" stroke="#ced0d6" stroke-width="2.6" stroke-linecap="round" stroke-linejoin="round"><path d="M49.5,1740 A16.5,16.5 0 1 1 36,1732"/><path d="M36,1741 L36,1752"/></g><circle cx="36" cy="1758" r="1.8" fill="#ced0d6"/><circle cx="49" cy="1735" r="7.5" fill="#e55b5b"/><g fill="none" stroke="#ced0d6" stroke-width="2.6" stroke-linecap="round" stroke-linejoin="round"><circle cx="27" cy="1816" r="5.5"/><circle cx="44" cy="1822" r="5.5"/><path d="M27,1821.5 L27,1846 M27,1836 L36,1836 Q44,1836 44,1828"/></g><polyline points="225,179 232.5,187 240,179" fill="none" stroke="#ced0d6" stroke-width="2.4" stroke-linecap="round" stroke-linejoin="round"/><path d="M95,262 L95,243 Q95,241 97,241 L103.64,241 L107.56,246.28 L118,246.28 Q120,246.28 120,248.28 L120,261 Q120,263 118,263 L97,263 Q95,263 95,261 Z" fill="#43454a" stroke="#ced0d6" stroke-width="2.6" stroke-linecap="round" stroke-linejoin="round"/><polyline points="96,297 103.5,305 111,297" fill="none" stroke="#a8abb0" stroke-width="2.4" stroke-linecap="round" stroke-linejoin="round"/><path d="M133,310 L133,291 Q133,289 135,289 L141.64,289 L145.56,294.28 L156,294.28 Q158,294.28 158,296.28 L158,309 Q158,311 156,311 L135,311 Q133,311 133,309 Z" fill="#43454a" stroke="#ced0d6" stroke-width="2.6" stroke-linecap="round" stroke-linejoin="round"/><use href="#gopher" x="172" y="334" width="23" height="29"/><use href="#gopher" x="172" y="382" width="23" height="29"/><use href="#gopher" x="172" y="430" width="23" height="29"/><use href="#gopher" x="172" y="478" width="23" height="29"/><use href="#gopher" x="172" y="526" width="23" height="29"/><use href="#gopher" x="172" y="574" width="23" height="29"/><use href="#gopher" x="172" y="622" width="23" height="29"/><use href="#gopher" x="172" y="670" width="23" height="29"/><use href="#gopher" x="172" y="718" width="23" height="29"/><rect x="133" y="771" width="24" height="2.4" fill="#ced0d6"/><rect x="133" y="777" width="18.0" height="2.4" fill="#ced0d6"/><rect x="133" y="783" width="24" height="2.4" fill="#ced0d6"/><rect x="133" y="789" width="15.600000000000001" height="2.4" fill="#ced0d6"/><use href="#gopher" x="133" y="814" width="23" height="29"/><rect x="146.5" y="830" width="13.5" height="13.5" rx="3" fill="#25324d" stroke="#548af7" stroke-width="2.2"/><g fill="none" stroke="#ced0d6" stroke-width="2.4" stroke-linecap="round" stroke-linejoin="round"><rect x="96" y="871" width="8" height="15" fill="#43454a"/><rect x="104" y="865" width="8" height="21" fill="#43454a"/><rect x="112" y="874" width="8" height="12" fill="#43454a"/></g><rect x="95" y="915" width="12" height="2.4" fill="#ced0d6"/><rect x="95" y="921" width="14" height="2.4" fill="#ced0d6"/><rect x="95" y="927" width="24" height="2.4" fill="#ced0d6"/><rect x="95" y="933" width="12" height="2.4" fill="#ced0d6"/><circle cx="116" cy="915" r="7.5" fill="#548af7"/><path d="M116,911 L116,915.5 L119,918" fill="none" stroke="#2b2d30" stroke-width="1.8"/><use href="#gopher" x="423" y="168" width="23" height="29"/><rect x="436.5" y="184" width="13.5" height="13.5" rx="3" fill="#25324d" stroke="#548af7" stroke-width="2.2"/><use href="#gopher" x="627" y="167" width="23" height="29"/><path d="M772,176 L786,190 M786,176 L772,190" fill="none" stroke="#8c8f96" stroke-width="2.4" stroke-linecap="round" stroke-linejoin="round"/><rect x="837" y="174" width="24" height="2.4" fill="#ced0d6"/><rect x="837" y="180" width="18.0" height="2.4" fill="#ced0d6"/><rect x="837" y="186" width="24" height="2.4" fill="#ced0d6"/><rect x="837" y="192" width="15.600000000000001" height="2.4" fill="#ced0d6"/><use href="#gopher" x="1042" y="167" width="23" height="29"/><use href="#gopher" x="1352" y="167" width="23" height="29"/><use href="#gopher" x="1658" y="167" width="23" height="29"/><use href="#gopher" x="1922" y="167" width="23" height="29"/><use href="#gopher" x="2187" y="167" width="23" height="29"/><use href="#gopher" x="2455" y="167" width="23" height="29"/><use href="#gopher" x="2715" y="167" width="23" height="29"/><circle cx="3074" cy="171" r="2.6" fill="#ced0d6"/><circle cx="3074" cy="182" r="2.6" fill="#ced0d6"/><circle cx="3074" cy="193" r="2.6" fill="#ced0d6"/><path d="M2990,240 L3000.5,258 L2979.5,258 Z" fill="#e2b650" stroke="#e2b650" stroke-width="3.2" stroke-linejoin="round"/><rect x="2988.8" y="243.5" width="2.4" height="9" rx="1.2" fill="#2a1c10"/><circle cx="2990" cy="255.6" r="1.6" fill="#2a1c10"/><path d="M3010.5,246 L3013.8,243 L3013.8,257" fill="none" stroke="#c8cad0" stroke-width="2"/><polyline points="3041,253 3048.5,245 3056,253" fill="none" stroke="#a8abb0" stroke-width="2.2" stroke-linecap="round" stroke-linejoin="round"/><polyline points="3083,246 3090.5,254 3098,246" fill="none" stroke="#a8abb0" stroke-width="2.2" stroke-linecap="round" stroke-linejoin="round"/><path d="M3161,165.5 Q3158.5,164.5 3155.7,164.5 Q3146.5,164.5 3146.5,176 L3146.5,180 Q3146.5,185 3143.5,189 L3140.5,193.5 L3171,193.5 L3168,189 Q3165,185 3165,180 L3165,177" fill="none" stroke="#ced0d6" stroke-width="2.5" stroke-linecap="round" stroke-linejoin="round"/><path d="M3151.5,197 L3160,197 Q3158.5,201 3155.7,201 Q3153,201 3151.5,197 Z" fill="#ced0d6"/><circle cx="3169" cy="169" r="7.3" fill="#e55b5b"/><polyline points="3165.18,274.56 3163.04,275.55 3160.78,276.23 3158.46,276.59 3156.13,276.62 3153.85,276.33 3151.67,275.74 3149.63,274.85 3147.78,273.71 3146.16,272.34 3144.79,270.78 3143.71,269.06 3142.93,267.24 3142.46,265.35 3142.31,263.44 3142.48,261.55 3142.94,259.73 3143.69,258.01 3144.71,256.44 3145.95,255.04 3147.39,253.85 3148.98,252.89 3150.70,252.16 3152.49,251.69 3154.32,251.48 3156.13,251.52 3157.89,251.81 3159.56,252.33 3161.11,253.07 3162.49,254.01 3163.69,255.11 3164.68,256.34 3165.45,257.68 3165.97,259.09 3166.26,260.54 3166.30,261.98 3166.10,263.40 3165.69,264.74 3165.06,266.00 3164.25,267.13 3163.28,268.12 3162.17,268.95 3160.96,269.60 3159.68,270.07 3158.37,270.35 3157.04,270.44 3155.74,270.34 3154.49,270.07 3153.33,269.63 3152.27,269.05 3151.34,268.34 3150.56,267.53 3149.93,266.63 3149.47,265.68 3149.18,264.69 3149.06,263.70 3149.10,262.72 3149.31,261.78 3149.66,260.91 3150.14,260.11 3150.73,259.41 3151.41,258.82 3152.17,258.34 3152.98,257.99 3153.81,257.76 3154.65,257.65 3155.47,257.67 3156.26,257.80 3156.99,258.04 3157.65,258.36 3158.22,258.77 3158.71,259.24 3159.09,259.75 3159.37,260.30 3159.55,260.85 3159.62,261.41 3159.60,261.95 3159.49,262.45 3159.29,262.91 3159.03,263.32 3158.72,263.67" fill="none" stroke="#ced0d6" stroke-width="2.6" stroke-linecap="round" stroke-linejoin="round"/><g fill="none" stroke="#ced0d6" stroke-width="2.5" stroke-linecap="round" stroke-linejoin="round"><ellipse cx="3156" cy="330" rx="15" ry="5.3"/><path d="M3141,330 L3141,354.5 M3171,330 L3171,354.5"/><path d="M3141,338.5 Q3141,343.8 3156,343.8 Q3171,343.8 3171,338.5"/><path d="M3141,346.5 Q3141,351.8 3156,351.8 Q3171,351.8 3171,346.5"/><path d="M3141,354.5 Q3141,359.8 3156,359.8 Q3171,359.8 3171,354.5"/></g><use href="#gopherdim" x="207" y="1187" width="21" height="27"/><path d="M220,1202.5 Q220,1200 222.2,1201.2 L231.5,1206.6 Q233.5,1208 231.5,1209.4 L222.2,1214.8 Q220,1216 220,1213.5 Z" fill="#262a27" stroke="#2b2d30" stroke-width="6" stroke-linejoin="round"/><path d="M220,1202.5 Q220,1200 222.2,1201.2 L231.5,1206.6 Q233.5,1208 231.5,1209.4 L222.2,1214.8 Q220,1216 220,1213.5 Z" fill="#262a27" stroke="#4f7654" stroke-width="2.4" stroke-linejoin="round"/><path d="M579,1196 L593,1210 M593,1196 L579,1210" fill="none" stroke="#8c8f96" stroke-width="2.4" stroke-linecap="round" stroke-linejoin="round"/><circle cx="3020" cy="1191.0" r="2.6" fill="#ced0d6"/><circle cx="3020" cy="1201.5" r="2.6" fill="#ced0d6"/><circle cx="3020" cy="1212.0" r="2.6" fill="#ced0d6"/><path d="M3059,1201 L3085,1201" fill="none" stroke="#ced0d6" stroke-width="2.6" stroke-linecap="round" stroke-linejoin="round"/><path d="M112.96,1272.25 A11.5,11.5 0 1 0 102.00,1289.46" fill="none" stroke="#ced0d6" stroke-width="2.4"/><path d="M114.8,1264 L114.8,1273.5 L105.5,1273.5" fill="none" stroke="#ced0d6" stroke-width="2.4"/><path d="M106.5,1281 Q106.5,1278.5 108.7,1279.7 L117.5,1284.6 Q119.5,1286 117.5,1287.4 L108.7,1292.3 Q106.5,1293.5 106.5,1291 Z" fill="#24472a" stroke="#5a9b5e" stroke-width="2.2" stroke-linejoin="round"/><rect x="144" y="1266" width="24" height="24" rx="4" fill="#5c5c5c"/><rect x="188" y="1257" width="1.5" height="39" fill="#43454a"/><rect x="306" y="1257" width="1.5" height="39" fill="#43454a"/><g fill="none" stroke="#ced0d6" stroke-width="2.4"><path d="M208,1269 L219,1269 M208,1278 L219,1278 M208,1287 L236,1287 M229,1267 L229,1283"/><path d="M222,1276 L229,1283 L236,1276" stroke-linejoin="miter"/></g><g fill="none" stroke="#ced0d6" stroke-width="2.4" stroke-linecap="round"><path d="M262.5,1270 L285.5,1270 M270,1269.5 L270,1267.5 Q270,1265 272.5,1265 L278.5,1265 Q281,1265 281,1267.5 L281,1269.5"/><path d="M265.5,1270 L265.5,1288 Q265.5,1291.5 269,1291.5 L279.5,1291.5 Q283,1291.5 283,1288 L283,1270"/><path d="M270.5,1277 L270.5,1285 M277.5,1277 L277.5,1285"/></g><circle cx="340" cy="1268" r="2.6" fill="#ced0d6"/><circle cx="340" cy="1278" r="2.6" fill="#ced0d6"/><circle cx="340" cy="1288" r="2.6" fill="#ced0d6"/><rect x="25" y="1891" width="15" height="15" rx="3" fill="#25324d" stroke="#548af7" stroke-width="2.4"/><polyline points="237,1890 245,1897.5 237,1905" fill="none" stroke="#a8abb0" stroke-width="2.4" stroke-linecap="round" stroke-linejoin="round"/><polyline points="337,1890 345,1897.5 337,1905" fill="none" stroke="#a8abb0" stroke-width="2.4" stroke-linecap="round" stroke-linejoin="round"/><use href="#gopher" x="369" y="1883" width="22" height="28"/><g fill="none" stroke="#c2c4c9" stroke-width="2.3" stroke-linecap="round" stroke-linejoin="round"><path d="M3001,1892 Q3011.5,1881 3022,1892"/><path d="M2999.5,1899.5 Q3011.5,1889 3023.5,1899.5 Q3011.5,1910 2999.5,1899.5 Z"/><path d="M3004,1907.5 Q3011.5,1911 3019,1907.5"/><path d="M2998.5,1910.5 L3024,1885.5"/></g><g fill="none" stroke="#c2c4c9" stroke-width="2.4" stroke-linecap="round" stroke-linejoin="round"><rect x="3134" y="1894.5" width="19.5" height="14.5" rx="3"/><path d="M3148.5,1894.5 L3148.5,1892 Q3148.5,1887 3154,1887 Q3159.5,1887 3159.5,1892 L3159.5,1895.5"/><path d="M3143.8,1899.5 L3143.8,1903.5"/></g><rect x="0" y="1925" width="3194" height="1.5" fill="#2a2a2a"/><defs><linearGradient id="wg" x1="0" y1="0" x2="1" y2="1"><stop offset="0" stop-color="#6ed0f8"/><stop offset="1" stop-color="#1478d4"/></linearGradient><linearGradient id="edg1" x1="0" y1="0" x2="1" y2="1"><stop offset="0" stop-color="#3ad4a0"/><stop offset="1" stop-color="#5fe0b8"/></linearGradient><linearGradient id="fhx" x1="0" y1="0" x2="0" y2="1"><stop offset="0" stop-color="#f4f0ff"/><stop offset="1" stop-color="#c9bff0"/></linearGradient><linearGradient id="vp" x1="0" y1="0" x2="1" y2="1"><stop offset="0" stop-color="#4f9cf5"/><stop offset="1" stop-color="#2457d6"/></linearGradient></defs><rect x="14" y="1943.5" width="18.2" height="18.2" rx="2.5" fill="url(#wg)"/><rect x="34.2" y="1943.5" width="18.2" height="18.2" rx="2.5" fill="url(#wg)"/><rect x="14" y="1963.7" width="18.2" height="18.2" rx="2.5" fill="url(#wg)"/><rect x="34.2" y="1963.7" width="18.2" height="18.2" rx="2.5" fill="url(#wg)"/><path d="M83,1946 Q83,1941 88,1941 L100,1941 L104,1944 L138,1944 Q142,1944 142,1948 L142,1960 L83,1960 Z" fill="#4a7bd0"/><rect x="88" y="1945.5" width="48" height="8" rx="1.5" fill="#ffffff"/><path d="M82,1952 Q82,1949 85,1949 L140,1949 Q143,1949 143,1952 L143,1984 Q143,1987 140,1987 L85,1987 Q82,1987 82,1984 Z" fill="#5a8fe2"/><path d="M102,1971 L112,1962 L122,1971 M105,1969 L105,1980 L119,1980 L119,1969" fill="none" stroke="#3f6fbf" stroke-width="2.5"/><rect x="105" y="1990" width="13" height="4" rx="2" fill="#8a8a8a"/><circle cx="194" cy="1963" r="27" fill="#4fd6ad"/><path d="M168,1966 Q168,1937 196,1936 Q212,1936 219,1950 Q210,1940 194,1941 Q172,1944 172,1966 Q173,1986 196,1990 Q175,1990 168,1966 Z" fill="#33c1c9" opacity="0.5"/><path d="M167,1963 Q168,1945 185,1942 Q203,1940 208,1953 Q196,1945 185,1952 Q175,1960 178,1973 Q182,1988 200,1989 Q212,1989 219,1978 Q213,1990 194,1990 Q167,1990 167,1963 Z" fill="#1b86de"/><path d="M208,1953 Q196,1945 185,1952 Q175,1960 178,1973 Q182,1988 200,1989 Q212,1989 219,1978 Q221,1972 214,1971 Q200,1975 193,1968 Q188,1960 197,1956 Q204,1953 208,1953 Z" fill="#1565c0"/><path d="M208,1953 Q204,1953 197,1956 Q188,1960 193,1968 Q200,1975 214,1971 Q221,1970 221,1963 Q221,1950 208,1953 Z" fill="#44433b"/><circle cx="276" cy="1963" r="27" fill="#2ba24c"/><path d="M276,1963 L252.6,1949.5 A27,27 0 0 1 299.4,1949.5 Z" fill="#e94235"/><path d="M276,1963 L299.4,1949.5 A27,27 0 0 1 276,1990 Z" fill="#fbbc04"/><circle cx="276" cy="1963" r="13" fill="#ffffff"/><circle cx="276" cy="1963" r="10" fill="#3b73d6"/><rect x="265" y="1990" width="22" height="4" rx="2" fill="#8a8a8a"/><path d="M343,1936 L373,1936 L388,1963 L373,1990 L343,1990 L328,1963 Z" fill="#5522e8"/><path d="M346,1942 L370,1942 L382,1963 L370,1984 L346,1984 L334,1963 Z" fill="#2a1090"/><path d="M348,1948 L378,1948 L375,1958 L356,1958 L356,1962 L372,1962 L369,1972 L356,1972 L352,1982 L340,1966 Z" fill="url(#fhx)"/><rect x="412" y="1940" width="56" height="46" rx="6" fill="#676a6d"/><path d="M421,1948 L433,1955 L421,1962 M429,1967 L444,1967" fill="none" stroke="#ffffff" stroke-width="2.4"/><circle cx="441" cy="1991" r="10" fill="#ffffff"/><path d="M441,1984 L441,1998 M434,1991 L448,1991" stroke="#1a73d9" stroke-width="2.6"/><circle cx="521.5" cy="1964" r="27" fill="#3ea8e0"/><path d="M506,1966 L536,1955 L530,1980 L520,1972 Z" fill="#e8f2f8" opacity="0.9"/><rect x="508" y="1934" width="53" height="29" rx="14.5" fill="#3a3a36"/><rect x="511" y="1936" width="48" height="25" rx="12.5" fill="#1d4d86" stroke="#2e7fd6" stroke-width="1.6"/><rect x="508" y="1990" width="28" height="4" rx="1" fill="#f07a1a"/><path d="M567,1994 L567,1938 Q567,1930 575,1930 L633,1930 Q641,1930 641,1938 L641,1994 Z" fill="#5a5850" opacity="0.75"/><circle cx="604" cy="1962.5" r="27" fill="#9f80dd"/><rect x="589" y="1948" width="30" height="30" rx="4" fill="#1c1c1c"/><rect x="592.5" y="1972" width="8" height="2.2" fill="#ffffff"/><rect x="590" y="1990" width="28" height="4" rx="1" fill="#63b3ed"/><rect x="660" y="1937" width="52" height="51" rx="9" fill="#f2f2f2"/><path d="M677,1951 L700,1962.5 L677,1974 Z" fill="url(#vp)" stroke="#2f6ee0" stroke-width="2" stroke-linejoin="round"/><path d="M706,1940 L712,1936 L712,1950 Z" fill="#d8d8d8"/><path d="M716,1942 Q719,1946 716,1950 M719,1939 Q724,1946 719,1953" fill="none" stroke="#e0e0e0" stroke-width="1.5"/><rect x="675" y="1990" width="22" height="4" rx="2" fill="#8a8a8a"/><rect x="742" y="1937" width="52" height="51" rx="9" fill="#2a2a2c"/><path d="M768,1940 L781,1958 L775,1983 L758,1984 L752,1966 Z" fill="#8f6fe0"/><path d="M768,1940 L781,1958 L770,1962 Z" fill="#b9a0f5"/><path d="M752,1966 L770,1962 L775,1983 L758,1984 Z" fill="#6b47c8"/><circle cx="768" cy="1991" r="10" fill="#ffffff"/><path d="M768,1984 L768,1998 M761,1991 L775,1991" stroke="#1a73d9" stroke-width="2.6"/><g transform="translate(823.5,1936) scale(1.0)"><rect x="0" y="0" width="53" height="53" rx="5" fill="#4a9be8"/><path d="M0,5 Q0,0 5,0 L30,0 Q22,18 0,22 Z" fill="#7cc0f2"/><path d="M53,25 L53,48 Q53,53 48,53 L23,53 Q28,30 53,25 Z" fill="#2a6fd6"/><path d="M9,10 L17,8 Q15,14 9,17 Z" fill="#ffffff"/><path d="M44,37 L44,45 L36,45 Q38,39 44,37 Z" fill="#ffffff"/></g><rect x="838" y="1990" width="22" height="4" rx="2" fill="#8a8a8a"/><g fill="none" stroke="#e6e6e6" stroke-width="2"><path d="M2048,1973 L2073,1973 Q2069,1968 2069,1962 L2069,1959 Q2069,1949 2060.5,1949 Q2052,1949 2052,1959 L2052,1962 Q2052,1968 2048,1973 Z"/><path d="M2056,1976 Q2060.5,1980 2065,1976"/></g><circle cx="2068" cy="1951.5" r="4.5" fill="#2d9be8" stroke="#3a3a36" stroke-width="1"/><path d="M2122.5,1949 L2134,1953 L2134,1964 Q2134,1973 2122.5,1977 Q2111,1973 2111,1964 L2111,1953 Z" fill="#e2e2e2"/><path d="M2117,1962.5 L2121,1966.5 L2128,1959.5" fill="none" stroke="#333" stroke-width="2.2"/><path d="M2172,1978 Q2165,1968 2175,1958 Q2180,1952 2178,1946 Q2190,1956 2182,1970 Q2178,1976 2172,1978 Z" fill="#e0e0e0"/><path d="M2182,1975 Q2180,1964 2190,1956 Q2195,1951 2194,1945 Q2203,1958 2193,1970 Q2188,1975 2182,1975 Z" fill="#bdbdbd"/><path d="M2190,1976 Q2192,1966 2202,1960 Q2200,1972 2190,1976 Z" fill="#7a7a7a"/><path d="M2233,1946 Q2248,1936 2258,1950 L2258,1966 L2233,1966 Z" fill="#8cc8ec"/><rect x="2238" y="1957" width="18" height="9" fill="#f0e0e0"/><path d="M2228,1964 L2266,1964 L2264,1984 L2231,1984 Z" fill="#caa66b"/><path d="M2228,1964 L2246,1972 L2264,1964" fill="#b48e50"/><circle cx="2260" cy="1976" r="6.5" fill="#0a8a0a"/><g transform="translate(2286.6,1940.5) scale(0.839622641509434)"><rect x="0" y="0" width="53" height="53" rx="5" fill="#4a9be8"/><path d="M0,5 Q0,0 5,0 L30,0 Q22,18 0,22 Z" fill="#7cc0f2"/><path d="M53,25 L53,48 Q53,53 48,53 L23,53 Q28,30 53,25 Z" fill="#2a6fd6"/><path d="M9,10 L17,8 Q15,14 9,17 Z" fill="#ffffff"/><path d="M44,37 L44,45 L36,45 Q38,39 44,37 Z" fill="#ffffff"/></g><circle cx="2370.5" cy="1963" r="17" fill="#ffffff"/><path d="M2358,1950 A17,17 0 0 1 2387,1960" fill="none" stroke="#2f73d6" stroke-width="3.5"/><path d="M2384,1972 A17,17 0 0 1 2356,1974" fill="none" stroke="#239a5e" stroke-width="3.5"/><path d="M2360,1955 L2370,1961 L2362,1966" fill="none" stroke="#1f9a55" stroke-width="3"/><path d="M2381,1960 L2371,1966 L2379,1971" fill="none" stroke="#2f73d6" stroke-width="3"/><path d="M2417,1963 L2451,1948 L2444,1978 L2433,1970 L2428,1977 L2428,1968 Z" fill="#e0e0e0"/><circle cx="2424" cy="1974" r="3.5" fill="#2d8be0"/><rect x="2479" y="1947" width="32" height="32" rx="6" fill="#f4f4f4"/><path d="M2490,1955 L2502,1963 L2490,1971 Z" fill="#333"/><g fill="none" stroke="#e6e6e6" stroke-width="2"><path d="M2551,1981 L2545,1981 Q2542,1981 2542,1978 L2542,1950 Q2542,1947 2545,1947 L2567,1947 Q2570,1947 2570,1950 L2570,1956"/><rect x="2552" y="1945" width="11" height="6" rx="3"/><rect x="2556" y="1957" width="19" height="24" rx="3"/></g><circle cx="2618.8" cy="1962.8" r="16" fill="none" stroke="#e6e6e6" stroke-width="2"/><path d="M2614,1955 L2625,1963 L2614,1971 Z" fill="#e6e6e6"/><rect x="2664" y="1952" width="35" height="23" rx="5" fill="none" stroke="#e6e6e6" stroke-width="2"/><circle cx="2670.5" cy="1958.5" r="1.3" fill="#e6e6e6"/><circle cx="2670.5" cy="1963.5" r="1.3" fill="#e6e6e6"/><circle cx="2676.0" cy="1958.5" r="1.3" fill="#e6e6e6"/><circle cx="2676.0" cy="1963.5" r="1.3" fill="#e6e6e6"/><circle cx="2681.5" cy="1958.5" r="1.3" fill="#e6e6e6"/><circle cx="2681.5" cy="1963.5" r="1.3" fill="#e6e6e6"/><circle cx="2687.0" cy="1958.5" r="1.3" fill="#e6e6e6"/><circle cx="2687.0" cy="1963.5" r="1.3" fill="#e6e6e6"/><circle cx="2692.5" cy="1958.5" r="1.3" fill="#e6e6e6"/><circle cx="2692.5" cy="1963.5" r="1.3" fill="#e6e6e6"/><rect x="2672" y="1968.5" width="19" height="1.8" fill="#e6e6e6"/><rect x="2726" y="1953" width="31" height="20" rx="3.5" fill="none" stroke="#e6e6e6" stroke-width="2"/><rect x="2729" y="1956" width="22" height="14" rx="1.5" fill="#e6e6e6"/><rect x="2757" y="1959.5" width="3.5" height="7" rx="1" fill="#e6e6e6"/><path d="M2796,1954 L2812,1970 L2805,1978 L2805,1947 L2812,1955 L2796,1971" fill="none" stroke="#e6e6e6" stroke-width="2"/><circle cx="2787" cy="1963" r="1.5" fill="#e6e6e6"/><circle cx="2794" cy="1963" r="1.5" fill="#e6e6e6"/><circle cx="2815" cy="1963" r="1.5" fill="#e6e6e6"/><circle cx="2822" cy="1963" r="1.5" fill="#e6e6e6"/><g fill="none" stroke-width="2.2" stroke-linecap="round"><path d="M2852,1960 Q2867,1946 2882,1960" stroke="#9a9a9a"/><path d="M2857,1965 Q2867,1955 2877,1965" stroke="#e6e6e6"/><path d="M2862,1969.5 Q2867,1965 2872,1969.5" stroke="#e6e6e6"/></g><circle cx="2867" cy="1973.5" r="2" fill="#e6e6e6"/><path d="M2913,1957 L2921,1957 L2931,1949 L2931,1977 L2921,1969 L2913,1969 Q2912,1969 2912,1967 L2912,1959 Q2912,1957 2913,1957 Z" fill="none" stroke="#e6e6e6" stroke-width="2"/><path d="M2936,1957 Q2940,1963 2936,1969" fill="none" stroke="#e6e6e6" stroke-width="2"/><path d="M2940,1951 Q2947,1963 2940,1975" fill="none" stroke="#9a9a9a" stroke-width="2"/><polyline points="2975,1969 2986,1958 2997,1969" fill="none" stroke="#e6e6e6" stroke-width="2.6"/></svg>
<div style="position:absolute;left:110.5px;top:87.6px;font-family:'Liberation Sans';font-size:27px;line-height:27px;font-weight:400;color:#ffffff;white-space:pre;transform:scaleX(0.9);transform-origin:0 0">AP</div><div style="position:absolute;left:592px;top:1950.8px;font-family:'Liberation Sans';font-size:18px;line-height:18px;font-weight:700;color:#ffffff;white-space:pre;transform:scaleX(0.92);transform-origin:0 0">GO</div><div style="position:absolute;left:515px;top:1939.1px;font-family:'Liberation Sans';font-size:20px;line-height:20px;font-weight:400;color:#e8eef5;white-space:pre;transform:scaleX(0.8);transform-origin:0 0">9,999</div>
</body></html>
